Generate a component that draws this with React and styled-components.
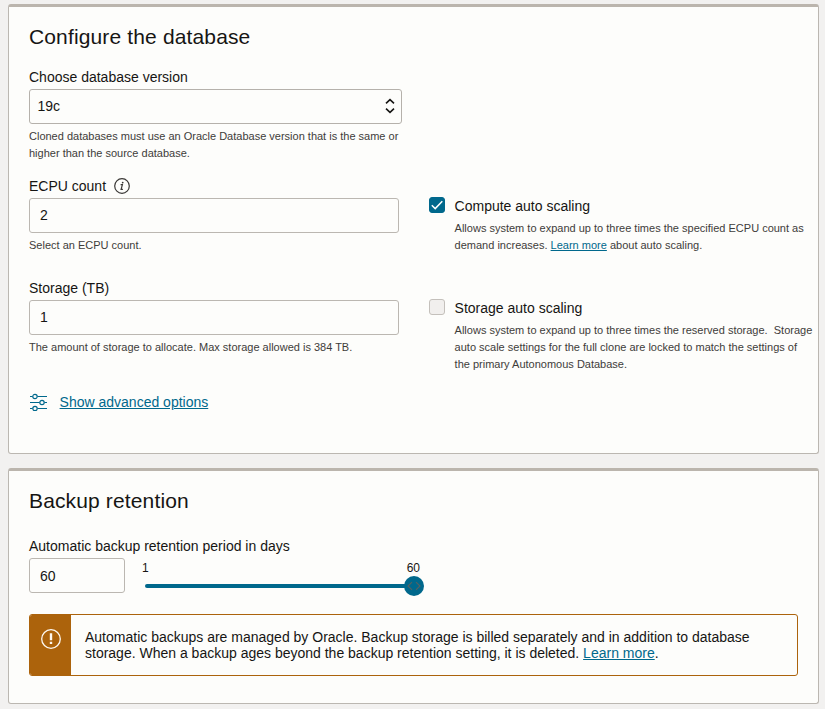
import React from "react";
import styled, { createGlobalStyle } from "styled-components";

const GlobalStyle = createGlobalStyle`
  * { box-sizing: border-box; }
  body {
    margin: 0;
    background: #f2f1f0;
    color: #161513;
    font-family: "Liberation Sans", Arial, sans-serif;
    font-size: 14px;
    line-height: 16px;
  }
  input, select, button { font: inherit; color: inherit; }
`;

const Page = styled.main`
  display: flex;
  flex-direction: column;
  gap: 14px;
  height: 709px;
  padding: 4px 6px 5px 8px;
  overflow: hidden;
`;

const Card = styled.section`
  height: ${(p) => p.$height}px;
  padding: 0 0 0 20px;
  background: #fdfdfb;
  border: 1px solid #bbb7b1;
  border-top: 3px solid #bbb5ad;
  border-radius: 3px;
`;

const Title = styled.h2`
  margin: 17px 0 ${(p) => p.$gap}px;
  font-size: 21px;
  font-weight: 400;
  line-height: 26px;
  letter-spacing: 0.14px;
`;

const Label = styled.label`
  display: flex;
  align-items: center;
  gap: 8px;
  height: 16px;
  margin-bottom: 4px;
`;

const Field = styled.div`
  flex: none;
  width: ${(p) => p.$width}px;
`;

const Input = styled.input`
  display: block;
  width: 100%;
  height: 35px;
  padding: 0 10px ${(p) => (p.$raised ? 2 : 0)}px;
  background: #fdfdfb;
  border: 1px solid #bbb7b1;
  border-radius: 3px;
  outline: none;
`;

const SelectBox = styled.button`
  display: flex;
  align-items: center;
  justify-content: space-between;
  width: 100%;
  height: 35px;
  padding: 0 6px 1px 7.5px;
  background: #fdfdfb;
  border: 1px solid #b5b1ab;
  border-radius: 3px;
  text-align: left;
`;

const Hint = styled.p`
  margin: 4px 0 0;
  color: #3e3c3a;
  font-size: 11px;
  line-height: 17px;
  white-space: pre;
`;

const Row = styled.div`
  display: flex;
  height: 102px;
  margin-top: ${(p) => p.$top || 0}px;
`;

const CheckRow = styled.div`
  display: grid;
  grid-template-columns: 16px 1fr;
  column-gap: 9.6px;
  align-content: start;
  margin: 19px 0 0 30px;
  white-space: nowrap;
`;

const Checkbox = styled.span`
  display: flex;
  width: 16px;
  height: 16px;
  border-radius: 3px;
  background: ${(p) => (p.$checked ? "#00688c" : "#f1efed")};
  border: 1px solid ${(p) => (p.$checked ? "#00688c" : "#c4c0bb")};
`;

const CheckText = styled.div`
  padding-top: 1px;
`;

const CheckHint = styled(Hint)`
  margin-top: 6px;
`;

const Link = styled.a`
  color: #00688c;
  text-decoration: underline;
`;

const Advanced = styled.div`
  display: flex;
  align-items: center;
  gap: 11.6px;
  height: 18px;
  margin-top: 11px;
`;

const RetentionRow = styled.div`
  display: flex;
  height: 35px;
`;

const Slider = styled.div`
  display: flex;
  flex-direction: column;
  width: 282px;
  margin-left: 17px;
`;

const SliderScale = styled.div`
  display: flex;
  justify-content: space-between;
  margin-top: 3px;
  padding-right: 4px;
  font-size: 12px;
  line-height: 14px;
`;

const SliderTrack = styled.div`
  display: flex;
  align-items: center;
  height: 20px;
  margin: 1px 0 0 3px;
`;

const SliderBar = styled.div`
  width: 260px;
  height: 4px;
  border-radius: 2px 0 0 2px;
  background: #00688c;
`;

const Thumb = styled.div`
  display: flex;
  width: 20px;
  height: 20px;
  margin-left: -1px;
  border-radius: 50%;
  background: #00688c;
`;

const Alert = styled.div`
  display: flex;
  width: 769px;
  height: 62px;
  margin-top: 21px;
  border: 1px solid #ac630c;
  border-radius: 3px;
  overflow: hidden;
`;

const AlertIcon = styled.div`
  width: 41px;
  padding: 14px 0 0 10px;
  background: #ac630c;
`;

const AlertText = styled.p`
  margin: 14px 0 0 14px;
  white-space: pre;
`;

const ChevronPair = () => (
  <svg width="10" height="16" viewBox="0 0 10 16" fill="none" stroke="#161513" strokeWidth="1.6">
    <path d="M1 5.3 5 1.6 9 5.3M1 10.7 5 14.4 9 10.7" />
  </svg>
);

const InfoIcon = () => (
  <svg width="16" height="16" viewBox="0 0 16 16" fill="none" stroke="#3a3836">
    <circle cx="8" cy="8" r="7.3" strokeWidth="1.2" />
    <path d="M6.6 6.7H8.4L7.1 11.3H8.9" strokeWidth="1.2" />
    <circle cx="8.7" cy="4.6" r="0.9" fill="#3a3836" stroke="none" />
  </svg>
);

const CheckIcon = () => (
  <svg width="14" height="14" viewBox="0 0 14 14" fill="none" stroke="#fff" strokeWidth="1.5">
    <path d="M1.8 7.3 5.2 10.6 12.3 3.2" />
  </svg>
);

const SlidersIcon = () => (
  <svg width="19" height="18" viewBox="0 -1 19 18" fill="none" stroke="#00688c" strokeWidth="1.2">
    <path d="M1 2.5H3.5M8.5 2.5H18M1 8.5H10.5M15.5 8.5H18M1 14.5H3.5M8.5 14.5H18" />
    <circle cx="6" cy="2.5" r="2.2" />
    <circle cx="13" cy="8.5" r="2.2" />
    <circle cx="6" cy="14.5" r="2.2" />
  </svg>
);

const ThumbArrows = () => (
  <svg width="20" height="20" viewBox="0 0 20 20" fill="none" stroke="#59605f" strokeWidth="1.1">
    <path d="M8 6.2 4 10 8 13.8M12 6.2 16 10 12 13.8" />
  </svg>
);

const WarningIcon = () => (
  <svg width="22" height="20" viewBox="0 0 22 20" fill="none" stroke="#fdf8f1">
    <circle cx="11" cy="10" r="9.3" strokeWidth="1.3" />
    <path d="M11 4.2V11.2M11 12.8V15" strokeWidth="2.4" />
  </svg>
);

export default function App() {
  return (
    <>
      <GlobalStyle />
      <Page>
        <Card $height={450}>
          <Title $gap={19}>Configure the database</Title>
          <Field $width={373}>
            <Label>Choose database version</Label>
            <SelectBox type="button">
              19c
              <ChevronPair />
            </SelectBox>
            <Hint>{"Cloned databases must use an Oracle Database version that is the same or\nhigher than the source database."}</Hint>
          </Field>
          <Row $top={16}>
            <Field $width={370}>
              <Label>ECPU count <InfoIcon /></Label>
              <Input defaultValue="2" $raised />
              <Hint>Select an ECPU count.</Hint>
            </Field>
            <CheckRow>
              <Checkbox $checked><CheckIcon /></Checkbox>
              <CheckText>
                Compute auto scaling
                <CheckHint>
                  {"Allows system to expand up to three times the specified ECPU count as\ndemand increases. "}
                  <Link>Learn more</Link> about auto scaling.
                </CheckHint>
              </CheckText>
            </CheckRow>
          </Row>
          <Row>
            <Field $width={370}>
              <Label>Storage (TB)</Label>
              <Input defaultValue="1" $raised />
              <Hint>The amount of storage to allocate. Max storage allowed is 384 TB.</Hint>
            </Field>
            <CheckRow>
              <Checkbox />
              <CheckText>
                Storage auto scaling
                <CheckHint>
                  {"Allows system to expand up to three times the reserved storage.  Storage\nauto scale settings for the full clone are locked to match the settings of\nthe primary Autonomous Database."}
                </CheckHint>
              </CheckText>
            </CheckRow>
          </Row>
          <Advanced>
            <SlidersIcon />
            <Link>Show advanced options</Link>
          </Advanced>
        </Card>
        <Card $height={236}>
          <Title $gap={24}>Backup retention</Title>
          <Label>Automatic backup retention period in days</Label>
          <RetentionRow>
            <Field $width={96}>
              <Input defaultValue="60" />
            </Field>
            <Slider>
              <SliderScale><span>1</span><span>60</span></SliderScale>
              <SliderTrack>
                <SliderBar />
                <Thumb><ThumbArrows /></Thumb>
              </SliderTrack>
            </Slider>
          </RetentionRow>
          <Alert>
            <AlertIcon><WarningIcon /></AlertIcon>
            <AlertText>
              {"Automatic backups are managed by Oracle. Backup storage is billed separately and in addition to database\nstorage. When a backup ages beyond the backup retention setting, it is deleted. "}
              <Link>Learn more</Link>.
            </AlertText>
          </Alert>
        </Card>
      </Page>
    </>
  );
}
